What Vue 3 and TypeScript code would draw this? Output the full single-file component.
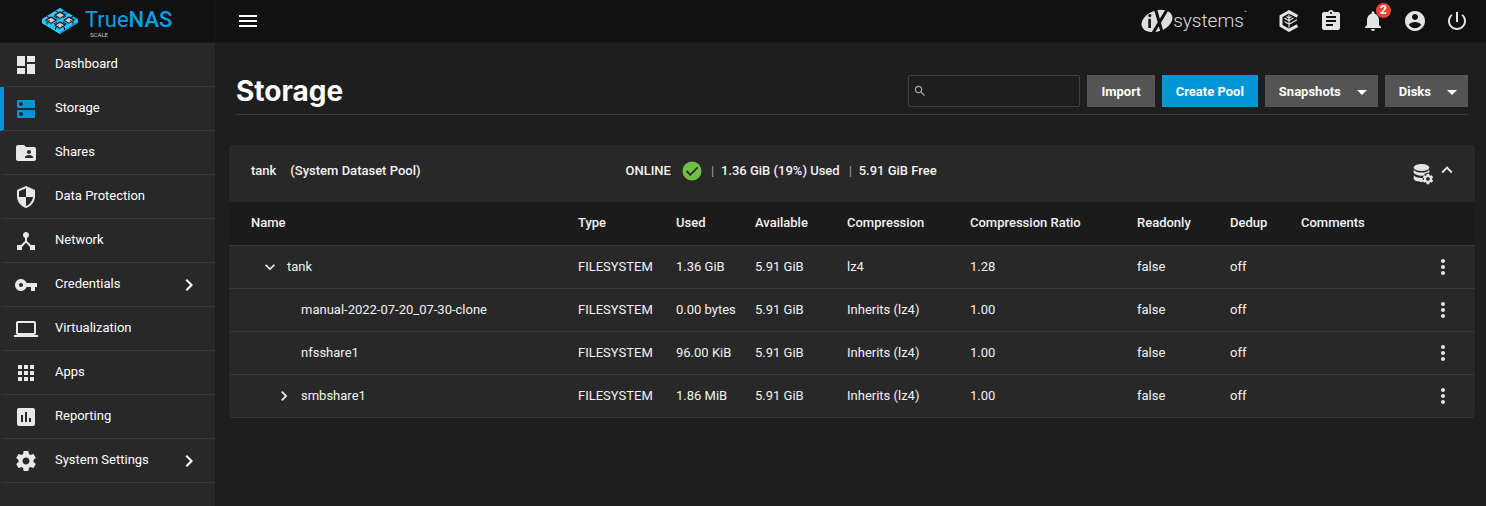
<script setup lang="ts">
import { ref } from 'vue'

interface NavItem {
  label: string
  icon: string
  expandable?: boolean
}

interface DatasetRow {
  name: string
  level: number
  toggle?: 'open' | 'closed'
  used: string
  compression: string
  ratio: string
}

const navItems: NavItem[] = [
  { label: 'Dashboard', icon: 'M13,3V9H21V3M13,21H21V11H13M3,21H11V15H3M3,13H11V3H3V13Z' },
  { label: 'Storage', icon: 'M20 13H4c-.55 0-1 .45-1 1v6c0 .55.45 1 1 1h16c.55 0 1-.45 1-1v-6c0-.55-.45-1-1-1zM7 19c-1.1 0-2-.9-2-2s.9-2 2-2 2 .9 2 2-.9 2-2 2zM20 3H4c-.55 0-1 .45-1 1v6c0 .55.45 1 1 1h16c.55 0 1-.45 1-1V4c0-.55-.45-1-1-1zM7 9c-1.1 0-2-.9-2-2s.9-2 2-2 2 .9 2 2-.9 2-2 2z' },
  { label: 'Shares', icon: 'M20 6h-8l-2-2H4c-1.1 0-1.99.9-1.99 2L2 18c0 1.1.9 2 2 2h16c1.1 0 2-.9 2-2V8c0-1.100-.9-2-2-2zm-5 3c1.100 0 2 .9 2 2s-.9 2-2 2-2-.9-2-2 .9-2 2-2zm4 8h-8v-1c0-1.330 2.670-2 4-2s4 .67 4 2v1z' },
  { label: 'Data Protection', icon: 'M12 1L3 5v6c0 5.550 3.840 10.740 9 12 5.160-1.260 9-6.450 9-12V5l-9-4zm0 10.990h7c-.53 4.120-3.280 7.790-7 8.940V12H5V6.300l7-3.110v8.800z' },
  { label: 'Network', icon: 'M17 16l-4-4V8.820C14.160 8.400 15 7.300 15 6c0-1.660-1.340-3-3-3S9 4.340 9 6c0 1.300.84 2.400 2 2.820V12l-4 4H3v5h5v-3.050l4-4.200 4 4.200V21h5v-5h-4z' },
  { label: 'Credentials', icon: 'M12.650 10C11.830 7.670 9.610 6 7 6c-3.310 0-6 2.690-6 6s2.690 6 6 6c2.610 0 4.830-1.670 5.650-4H17v4h4v-4h2v-4H12.650zM7 14c-1.100 0-2-.9-2-2s.9-2 2-2 2 .9 2 2-.9 2-2 2z', expandable: true },
  { label: 'Virtualization', icon: 'M20 18c1.100 0 1.990-.9 1.990-2L22 6c0-1.100-.9-2-2-2H4c-1.100 0-2 .9-2 2v10c0 1.100.9 2 2 2H0v2h24v-2h-4zM4 6h16v10H4V6z' },
  { label: 'Apps', icon: 'M4 8h4V4H4v4zm6 12h4v-4h-4v4zm-6 0h4v-4H4v4zm0-6h4v-4H4v4zm6 0h4v-4h-4v4zm6-10v4h4V4h-4zm-6 4h4V4h-4v4zm6 6h4v-4h-4v4zm0 6h4v-4h-4v4z' },
  { label: 'Reporting', icon: 'M19 3H5c-1.100 0-2 .9-2 2v14c0 1.100.9 2 2 2h14c1.100 0 2-.9 2-2V5c0-1.100-.9-2-2-2zM9 17H7v-7h2v7zm4 0h-2V7h2v10zm4 0h-2v-4h2v4z' },
  { label: 'System Settings', icon: 'M19.430 12.980c.04-.32.07-.64.07-.98s-.03-.66-.07-.98l2.110-1.650c.19-.15.24-.42.12-.64l-2-3.460c-.12-.22-.39-.3-.61-.22l-2.490 1c-.52-.4-1.080-.73-1.690-.98l-.38-2.650C14.460 2.180 14.250 2 14 2h-4c-.25 0-.46.18-.49.42l-.38 2.650c-.61.25-1.170.59-1.690.98l-2.490-1c-.23-.09-.49 0-.61.22l-2 3.460c-.13.22-.07.49.12.64l2.110 1.650c-.04.32-.07.65-.07.98s.03.66.07.98l-2.110 1.650c-.19.15-.24.42-.12.64l2 3.460c.12.22.39.3.61.22l2.490-1c.52.4 1.080.73 1.690.98l.38 2.650c.03.24.24.42.49.42h4c.25 0 .46-.18.49-.42l.38-2.650c.61-.25 1.170-.59 1.690-.98l2.490 1c.23.09.49 0 .61-.22l2-3.460c.12-.22.07-.49-.12-.64l-2.110-1.650zM12 15.500c-1.930 0-3.500-1.570-3.500-3.500s1.570-3.500 3.500-3.500 3.500 1.570 3.500 3.500-1.570 3.500-3.500 3.500z', expandable: true },
]

const columns: string[] = ['Name', 'Type', 'Used', 'Available', 'Compression', 'Compression Ratio', 'Readonly', 'Dedup', 'Comments']

const rows: DatasetRow[] = [
  { name: 'tank', level: 1, toggle: 'open', used: '1.36 GiB', compression: 'lz4', ratio: '1.28' },
  { name: 'manual-2022-07-20_07-30-clone', level: 2, used: '0.00 bytes', compression: 'Inherits (lz4)', ratio: '1.00' },
  { name: 'nfsshare1', level: 2, used: '96.00 KiB', compression: 'Inherits (lz4)', ratio: '1.00' },
  { name: 'smbshare1', level: 2, toggle: 'closed', used: '1.86 MiB', compression: 'Inherits (lz4)', ratio: '1.00' },
]

/* Centres of the four cells on the isometric logo */
const cells: [number, number][] = [[18, 7], [9, 12], [27, 12], [18, 17]]

const active = ref('Storage')
const search = ref('')

const chevronRight = 'M8.590 16.580L13.170 12 8.590 7.410 10 6l6 6-6 6z'
const chevronDown = 'M7.410 8.580L12 13.170l4.590-4.590L18 10l-6 6-6-6z'
const chevronUp = 'M7.410 15.410L12 10.830l4.590 4.580L18 14l-6-6-6 6z'
</script>

<template>
  <div class="app">
    <header class="topbar">
      <a class="brand" href="#" aria-label="TrueNAS SCALE">
        <svg class="brand-mark" viewBox="0 0 36 26" aria-hidden="true">
          <path d="M18 0l18 11v4L18 26 0 15v-4z" fill="#0d9de0" />
          <path d="M0 11.500l18 11V26L0 15z" fill="#38c6f4" />
          <path d="M18 0l3.500 2L3.500 13.300 0 11.200zM27 5.500l3.500 2-18 11.300-3.500-2zM36 11v2L18 24v-3z" fill="#38c6f4" />
          <g v-for="([x, y], i) in cells" :key="i">
            <path :d="`M${x - 6} ${y}l6-3.800 6 3.800-6 3.800z`" fill="#111a20" />
            <path :d="`M${x - 4} ${y + 0.3}l4-2.500 4 2.500-4 2.500z`" fill="#d5cac4" />
          </g>
          <path d="M13 2.500l3.500 2.200M23 2.500l-3.500 2.200M4.500 8l3.500 2.200M31.500 8l-3.500 2.200M12 8l3 2M24 8l-3 2M12 16l3-2M24 16l-3-2M5 16.500V14l3-1.500M31 16.500V14l-3-1.500M13.500 22v-2.500l3-1.500M22.500 22v-2.500l-3-1.500" stroke="#111a20" stroke-width="1" fill="none" />
        </svg>
        <span class="brand-text">
          <span class="brand-name">True<b>NAS</b></span>
          <span class="brand-sub">SCALE</span>
        </span>
      </a>
      <button class="icon-btn menu-btn" type="button" aria-label="Toggle menu">
        <svg viewBox="0 0 24 24"><path d="M3 18h18v-2H3v2zm0-5h18v-2H3v2zm0-7v2h18V6H3z" /></svg>
      </button>
      <a class="vendor" href="#" aria-label="iXsystems">
        <svg class="vendor-mark" viewBox="0 0 32 24" aria-hidden="true">
          <ellipse cx="16" cy="12" rx="16" ry="10.500" transform="rotate(-20 16 12)" fill="#dedede" />
          <path d="M8.600 9.800V19" stroke="#111" stroke-width="2.600" />
          <circle cx="8.800" cy="6.600" r="1.600" fill="#111" />
          <path d="M14.500 0l6.800 24M26.500 0L12 24" stroke="#111" stroke-width="3" fill="none" />
        </svg>
        <span class="vendor-name">systems</span><span class="vendor-tm">™</span>
      </a>
      <nav class="actions" aria-label="Toolbar">
        <button class="icon-btn" type="button" aria-label="TrueCommand">
          <svg viewBox="0 0 24 24">
            <path d="M20.500 7.300L12 2.800 4 7.300v9.400l8 4.500 8.500-4.500" fill="none" stroke="currentColor" stroke-width="3" />
            <path d="M12 18.500v-13M7.500 9l4.500 2.700L16.500 9M7.500 12.500l4.500 2.700 8-4.400M9.500 7.500L12 9l2.500-1.500" fill="none" stroke="currentColor" stroke-width="1.200" />
          </svg>
        </button>
        <button class="icon-btn" type="button" aria-label="Jobs">
          <svg viewBox="0 0 24 24"><path d="M19 3h-4.180C14.400 1.840 13.300 1 12 1c-1.300 0-2.400.84-2.820 2H5c-1.100 0-2 .9-2 2v14c0 1.100.9 2 2 2h14c1.100 0 2-.9 2-2V5c0-1.100-.9-2-2-2zm-7 0c.55 0 1 .45 1 1s-.45 1-1 1-1-.45-1-1 .45-1 1-1zm2 14H7v-2h7v2zm3-4H7v-2h10v2zm0-4H7V7h10v2z" /></svg>
        </button>
        <button class="icon-btn" type="button" aria-label="Alerts">
          <svg viewBox="0 0 24 24"><path d="M12 22c1.100 0 2-.9 2-2h-4c0 1.100.89 2 2 2zm6-6v-5c0-3.070-1.640-5.640-4.500-6.320V4c0-.83-.67-1.500-1.500-1.500s-1.500.67-1.500 1.500v.68C7.630 5.360 6 7.920 6 11v5l-2 2v1h16v-1l-2-2z" /></svg>
          <span class="badge">2</span>
        </button>
        <button class="icon-btn" type="button" aria-label="Account">
          <svg viewBox="0 0 24 24"><path d="M12 2C6.480 2 2 6.480 2 12s4.480 10 10 10 10-4.480 10-10S17.520 2 12 2zm0 3c1.660 0 3 1.340 3 3s-1.340 3-3 3-3-1.340-3-3 1.340-3 3-3zm0 14.200c-2.500 0-4.710-1.280-6-3.220.03-1.990 4-3.080 6-3.080 1.990 0 5.970 1.090 6 3.080-1.290 1.940-3.500 3.220-6 3.220z" /></svg>
        </button>
        <button class="icon-btn" type="button" aria-label="Power">
          <svg viewBox="0 0 24 24"><path d="M13 3h-2v10h2V3zm4.830 2.170l-1.420 1.420C17.990 7.860 19 9.810 19 12c0 3.870-3.130 7-7 7s-7-3.130-7-7c0-2.190 1.010-4.140 2.580-5.420L6.170 5.170C4.230 6.820 3 9.260 3 12c0 4.970 4.030 9 9 9s9-4.030 9-9c0-2.740-1.230-5.180-3.170-6.830z" /></svg>
        </button>
      </nav>
    </header>

    <div class="body">
      <nav class="sidebar" aria-label="Main">
        <a
          v-for="item in navItems"
          :key="item.label"
          href="#"
          class="nav-item"
          :class="{ active: item.label === active }"
          @click.prevent="active = item.label"
        >
          <svg class="nav-icon" viewBox="0 0 24 24" aria-hidden="true"><path :d="item.icon" /></svg>
          <span class="nav-label">{{ item.label }}</span>
          <svg v-if="item.expandable" class="nav-chevron" viewBox="0 0 24 24" aria-hidden="true"><path :d="chevronRight" /></svg>
        </a>
      </nav>

      <main class="content">
        <div class="page-head">
          <h1>Storage</h1>
          <label class="search">
            <svg viewBox="0 0 24 24" aria-hidden="true"><path d="M15.500 14h-.79l-.28-.27C15.410 12.590 16 11.110 16 9.500 16 5.910 13.090 3 9.500 3S3 5.910 3 9.500 5.910 16 9.500 16c1.610 0 3.090-.59 4.230-1.570l.27.28v.79l5 4.990L20.490 19l-4.990-5zm-6 0C7.010 14 5 11.990 5 9.500S7.010 5 9.500 5 14 7.010 14 9.500 11.990 14 9.500 14z" /></svg>
            <input v-model="search" type="text" aria-label="Search">
          </label>
          <button class="btn" type="button">Import</button>
          <button class="btn primary" type="button">Create Pool</button>
          <button class="btn" type="button" aria-haspopup="menu">
            Snapshots<span class="caret" />
          </button>
          <button class="btn" type="button" aria-haspopup="menu">
            Disks<span class="caret" />
          </button>
        </div>

        <section class="pool">
          <div class="pool-head">
            <div class="pool-title"><span>tank</span><span>(System Dataset Pool)</span></div>
            <div class="pool-status">
              <span>ONLINE</span>
              <svg class="ok" viewBox="0 0 20 20" aria-hidden="true">
                <circle cx="10" cy="10" r="9.500" fill="#71bf44" />
                <path d="M4.500 10l3.800 3.800 7.400-7.400" fill="none" stroke="#282828" stroke-width="1.800" />
              </svg>
              <span class="sep">|</span>
              <span>1.36 GiB (19%) Used</span>
              <span class="sep">|</span>
              <span>5.91 GiB Free</span>
            </div>
            <div class="pool-actions">
              <button class="icon-btn" type="button" aria-label="Pool settings">
                <svg viewBox="0 0 24 24">
                  <ellipse cx="10.500" cy="5.500" rx="7.800" ry="3.600" />
                  <path d="M2.700 7.800c1.500 2 4.500 2.800 7.800 2.800s6.300-.8 7.800-2.800v2.800c-3 0-4.500 1-5.500 2.800-4 .7-8.500-.2-10.100-2.600z" />
                  <path d="M2.700 13.300c1.500 2 5 2.800 9 2.600-.2 1.500.1 2.800.9 3.900-4.500.6-9.900-.8-9.900-3.500z" />
                  <g transform="translate(10.600 10.600) scale(.53)"><path :d="navItems[9].icon" /></g>
                </svg>
              </button>
              <button class="icon-btn collapse" type="button" aria-label="Collapse pool">
                <svg viewBox="0 0 24 24"><path :d="chevronUp" /></svg>
              </button>
            </div>
          </div>

          <table class="datasets">
            <colgroup>
              <col>
              <col class="w-type">
              <col class="w-used">
              <col class="w-available">
              <col class="w-compression">
              <col class="w-ratio">
              <col class="w-readonly">
              <col class="w-dedup">
              <col class="w-comments">
              <col class="w-menu">
            </colgroup>
            <thead>
              <tr>
                <th v-for="column in columns" :key="column" scope="col">{{ column }}</th>
                <td />
              </tr>
            </thead>
            <tbody>
              <tr v-for="row in rows" :key="row.name">
                <td>
                  <div class="name-cell" :class="`level-${row.level}`">
                    <button v-if="row.toggle" class="toggle" type="button" :aria-label="`Toggle ${row.name}`">
                      <svg viewBox="0 0 24 24"><path :d="row.toggle === 'open' ? chevronDown : chevronRight" /></svg>
                    </button>
                    <span v-else class="toggle" />
                    <span>{{ row.name }}</span>
                  </div>
                </td>
                <td>FILESYSTEM</td>
                <td>{{ row.used }}</td>
                <td>5.91 GiB</td>
                <td>{{ row.compression }}</td>
                <td>{{ row.ratio }}</td>
                <td>false</td>
                <td>off</td>
                <td />
                <td class="menu-cell">
                  <button class="icon-btn more" type="button" :aria-label="`Actions for ${row.name}`">
                    <svg viewBox="0 0 24 24"><path d="M12 8c1.100 0 2-.9 2-2s-.9-2-2-2-2 .9-2 2 .9 2 2 2zm0 2c-1.100 0-2 .9-2 2s.9 2 2 2 2-.9 2-2-.9-2-2-2zm0 6c-1.100 0-2 .9-2 2s.9 2 2 2 2-.9 2-2-.9-2-2-2z" /></svg>
                  </button>
                </td>
              </tr>
            </tbody>
          </table>
        </section>
      </main>
    </div>
  </div>
</template>

<style>
body {
  margin: 0;
  background: #1e1e1e;
}
</style>

<style scoped>
.app {
  display: flex;
  flex-direction: column;
  min-height: 100vh;
  background: #1e1e1e;
  color: #fff;
  font-family: Roboto, "Liberation Sans", sans-serif;
  font-size: 13px;
}
.app *,
.app {
  box-sizing: border-box;
}
a {
  color: inherit;
  text-decoration: none;
}
button {
  border: 0;
  padding: 0;
  background: none;
  color: inherit;
  font: inherit;
  cursor: pointer;
}
svg {
  display: block;
  flex: none;
  fill: currentColor;
}
.topbar {
  display: flex;
  align-items: center;
  height: 43px;
  padding-right: 17px;
  background: #111;
  border-bottom: 1px solid #191919;
}
.brand {
  display: flex;
  align-items: center;
  gap: 7px;
  width: 215px;
  height: 42px;
  padding-left: 42px;
  border-right: 1px solid #191919;
}
.brand-mark {
  width: 36px;
  height: 26px;
}
.brand-text {
  display: flex;
  flex-direction: column;
  padding-top: 3px;
}
.brand-name {
  color: #0b9fe5;
  font-size: 22px;
  line-height: 24px;
}
.brand-name b {
  font-weight: 500;
}
.brand-sub {
  padding-left: 5px;
  color: #c8c8c8;
  font-size: 6px;
  line-height: 6px;
}
.icon-btn {
  position: relative;
  width: 24px;
  height: 24px;
  color: #e4e4e4;
}
.icon-btn svg {
  width: 24px;
  height: 24px;
}
.menu-btn {
  margin-left: 21px;
  color: #fff;
}
.vendor {
  display: flex;
  align-items: center;
  margin-left: auto;
  color: #dedede;
}
.vendor-mark {
  width: 32px;
  height: 24px;
}
.vendor-name {
  font-size: 19px;
  font-weight: 300;
  line-height: 24px;
}
.vendor-tm {
  align-self: flex-start;
  font-size: 5px;
}
.actions {
  display: flex;
  gap: 18px;
  margin-left: 30px;
}
.badge {
  position: absolute;
  top: -6px;
  right: -6px;
  width: 15px;
  height: 15px;
  border-radius: 50%;
  background: #f44336;
  color: #fff;
  font-size: 12px;
  font-weight: 700;
  line-height: 15px;
  text-align: center;
}
.body {
  display: flex;
  flex: 1;
}
.sidebar {
  flex: none;
  width: 215px;
  background: #282828;
}
.nav-item {
  display: flex;
  align-items: center;
  height: 44px;
  padding: 0 14px 0 10px;
  border-left: 4px solid transparent;
  border-bottom: 1px solid #383838;
}
.nav-item.active {
  border-left-color: #0095d5;
}
.nav-icon {
  width: 24px;
  height: 24px;
  color: #e8e8e8;
}
.active .nav-icon {
  color: #0095d5;
}
.nav-label {
  flex: 1;
  padding: 0 0 2px 17px;
}
.nav-chevron {
  width: 24px;
  height: 24px;
}
.content {
  flex: 1;
  min-width: 0;
  padding: 28px 11px 0 14px;
}
.page-head {
  display: flex;
  align-items: center;
  gap: 7px;
  margin: 0 7px 30px;
  padding: 4px 0 7px;
  border-bottom: 1px solid #383838;
}
h1 {
  flex: 1;
  margin: 0;
  font-family: Inter, sans-serif;
  font-size: 28px;
  font-weight: 700;
  line-height: 32px;
}
.search {
  display: flex;
  align-items: center;
  width: 172px;
  height: 32px;
  padding: 0 4px;
  border: 1px solid #404040;
  border-radius: 2px;
}
.search svg {
  width: 14px;
  height: 14px;
  color: #aaa;
}
.search input {
  flex: 1;
  min-width: 0;
  border: 0;
  outline: 0;
  background: none;
  color: #fff;
  font: inherit;
}
.btn {
  display: flex;
  align-items: center;
  height: 32px;
  padding: 0 14px;
  background: #545454;
  font-weight: 700;
}
.btn.primary {
  background: #0095d5;
}
.caret {
  margin: 2px -3px 0 16px;
  border: 5px solid transparent;
  border-top-color: #fff;
  border-bottom: 0;
}
.pool {
  overflow: hidden;
  border-radius: 4px;
  background: #282828;
  color: #f2f2f2;
}
.pool-head {
  display: grid;
  grid-template-columns: 31% 1fr auto;
  align-items: center;
  height: 57px;
  padding: 0 16px 6px 22px;
  font-weight: 500;
}
.pool-title {
  display: flex;
  gap: 14px;
}
.pool-status {
  display: flex;
  align-items: center;
}
.ok {
  width: 20px;
  height: 20px;
  margin: 0 9px 0 11px;
}
.sep {
  width: 10px;
  color: #999;
}
.sep:nth-last-child(2) {
  margin-left: 9px;
}
.pool-actions {
  display: flex;
}
.pool-actions .icon-btn {
  margin-top: 6px;
}
.pool-actions .collapse {
  margin-top: 2px;
}
.collapse svg {
  width: 22px;
  height: 22px;
  margin: 0 auto;
}
.datasets {
  width: 100%;
  border-collapse: separate;
  border-spacing: 0;
  table-layout: fixed;
}
.datasets th,
.datasets td {
  height: 43px;
  padding: 0 0 2px;
  border-bottom: 1px solid #383838;
  text-align: left;
  white-space: nowrap;
}
.datasets thead th,
.datasets thead td {
  height: 44px;
  background: #1b1b1b;
  font-weight: 500;
}
.datasets th:first-child {
  padding-left: 22px;
}
.datasets .menu-cell {
  padding: 0;
}
.w-type { width: 98px; }
.w-used { width: 79px; }
.w-available { width: 92px; }
.w-compression { width: 123px; }
.w-ratio { width: 167px; }
.w-readonly { width: 93px; }
.w-dedup { width: 71px; }
.w-comments { width: 109px; }
.w-menu { width: 65px; }
.name-cell {
  display: flex;
  align-items: center;
  gap: 9px;
}
.level-1 {
  padding-left: 31px;
}
.level-2 {
  padding-left: 45px;
}
.toggle {
  width: 18px;
  height: 18px;
}
.toggle svg {
  width: 20px;
  height: 20px;
}
.more {
  display: block;
  margin-left: 21px;
}
</style>
